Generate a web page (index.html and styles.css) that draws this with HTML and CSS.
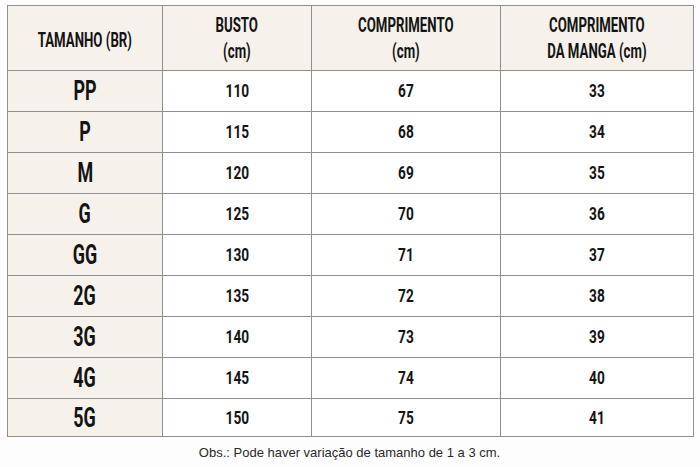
FILE: index.html
```html
<!DOCTYPE html>
<html lang="pt">
<head>
<meta charset="utf-8">
<link rel="stylesheet" href="styles.css">
</head>
<body>
<main class="page">
  <table class="sizes">
    <colgroup>
      <col class="c1"><col class="c2"><col class="c3"><col class="c4">
    </colgroup>
    <thead>
      <tr>
        <th class="lab"><span class="n">TAMANHO (BR)</span></th>
        <th><span class="n">BUSTO</span><br><span class="n">(cm)</span></th>
        <th><span class="n">COMPRIMENTO</span><br><span class="n">(cm)</span></th>
        <th><span class="n">COMPRIMENTO</span><br><span class="n">DA MANGA (cm)</span></th>
      </tr>
    </thead>
    <tbody>
      <tr><th><span class="n">PP</span></th><td><span class="n">110</span></td><td><span class="n">67</span></td><td><span class="n">33</span></td></tr>
      <tr><th><span class="n">P</span></th><td><span class="n">115</span></td><td><span class="n">68</span></td><td><span class="n">34</span></td></tr>
      <tr><th><span class="n">M</span></th><td><span class="n">120</span></td><td><span class="n">69</span></td><td><span class="n">35</span></td></tr>
      <tr><th><span class="n">G</span></th><td><span class="n">125</span></td><td><span class="n">70</span></td><td><span class="n">36</span></td></tr>
      <tr><th><span class="n">GG</span></th><td><span class="n">130</span></td><td><span class="n">71</span></td><td><span class="n">37</span></td></tr>
      <tr><th><span class="n">2G</span></th><td><span class="n">135</span></td><td><span class="n">72</span></td><td><span class="n">38</span></td></tr>
      <tr><th><span class="n">3G</span></th><td><span class="n">140</span></td><td><span class="n">73</span></td><td><span class="n">39</span></td></tr>
      <tr><th><span class="n">4G</span></th><td><span class="n">145</span></td><td><span class="n">74</span></td><td><span class="n">40</span></td></tr>
      <tr class="last"><th><span class="n">5G</span></th><td><span class="n">150</span></td><td><span class="n">75</span></td><td><span class="n">41</span></td></tr>
    </tbody>
  </table>
  <p class="note">Obs.: Pode haver variação de tamanho de 1 a 3 cm.</p>
</main>
</body>
</html>
```

FILE: styles.css
```css
html, body {
  margin: 0;
  padding: 0;
  background: #fdfdfd;
}
.page {
  padding: 5px 8px 0 7px;
  font-family: Roboto, "Liberation Sans", sans-serif;
}
.sizes {
  border-collapse: collapse;
  table-layout: fixed;
  width: 686px;
  color: #141414;
}
.c1 { width: 155px; }
.c2 { width: 149px; }
.c3 { width: 189px; }
.c4 { width: 193px; }
.sizes th, .sizes td {
  border: 1px solid #8f8f8f;
  padding: 0;
  text-align: center;
  vertical-align: middle;
  font-weight: 700;
}
.sizes thead th {
  background: #f6f2eb;
  height: 60px;
  font-size: 21px;
  line-height: 26px;
}
.sizes thead th .n { transform: scaleX(0.63); }
.sizes thead th.lab { padding-top: 4px; }
.sizes tbody th {
  background: #f6f2eb;
  font-size: 28px;
  line-height: 30px;
  height: 40px;
}
.sizes tbody th .n { transform: scaleX(0.64); }
.sizes tbody td {
  background: #ffffff;
  font-size: 19px;
  line-height: 22px;
  height: 40px;
}
.sizes tbody td .n { transform: scaleX(0.72); }
.sizes tbody tr.last th, .sizes tbody tr.last td { height: 37px; }
.n {
  display: inline-block;
  white-space: nowrap;
}
.note {
  margin: 8px 0 0;
  text-align: center;
  font-family: "Liberation Sans", Arial, sans-serif;
  font-size: 13px;
  line-height: 16px;
  color: #2a2a2a;
}
```
